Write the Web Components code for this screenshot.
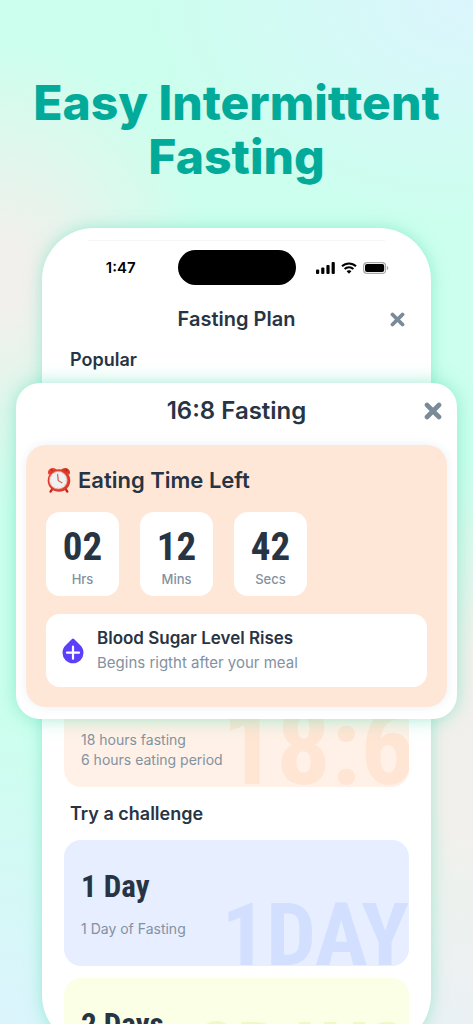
<!DOCTYPE html>
<html lang="en">
<head>
<meta charset="utf-8">
<meta name="viewport" content="width=device-width, initial-scale=1">
<title>Easy Intermittent Fasting</title>
<style>
  body {
    margin: 0;
    font-family: Inter, "Liberation Sans", sans-serif;
    color: #273444;
    --muted: #8391a1;
    --teal: #02ab99;
    --narrow: "Liberation Sans Narrow", "Roboto Condensed", Roboto, sans-serif;
  }
</style>
</head>
<body>
<promo-page>
  <span slot="title">Easy Intermittent Fasting</span>
  <phone-frame>
    <status-bar time="1:47"></status-bar>
    <sheet-header>Fasting Plan</sheet-header>
    <section-title>Popular</section-title>
    <fasting-popup>
      <sheet-header large>16:8 Fasting</sheet-header>
      <eating-timer>
        <time-tile slot="tiles" value="02">Hrs</time-tile>
        <time-tile slot="tiles" value="12">Mins</time-tile>
        <time-tile slot="tiles" value="42">Secs</time-tile>
        <body-status>Blood Sugar Level Rises<span slot="note">Begins rigtht after your meal</span></body-status>
      </eating-timer>
    </fasting-popup>
    <plan-card tone="peach" mark="18:6" tucked>18 hours fasting<br>6 hours eating period</plan-card>
    <section-title>Try a challenge</section-title>
    <plan-card tone="blue" mark="1DAY" heading="1 Day">1 Day of Fasting</plan-card>
    <plan-card tone="lime" mark="2DAYS" heading="2 Days" peek></plan-card>
  </phone-frame>
</promo-page>

<script>
const define = (name, render) => customElements.define(name, class extends HTMLElement {
  constructor() {
    super();
    this.attachShadow({ mode: 'open' });
  }
  connectedCallback() {
    this.shadowRoot.innerHTML = render(this);
  }
});

define('promo-page', () => `
  <style>
    :host {
      display: block; height: 100vh; overflow: hidden; box-sizing: border-box;
      padding: 76px 16px 0;
      background:
        radial-gradient(ellipse 70% 22% at 100% 0, #dcf5fd, #dcf5fd00),
        radial-gradient(ellipse 44% 23% at 0 27%, #f1f0ec 15%, #f1f0ec00),
        radial-gradient(ellipse 40% 28% at 100% 73%, #f2f0ec 30%, #f2f0ec00),
        radial-gradient(ellipse 50% 30% at 100% 100%, #eaf1f4 20%, #eaf1f400),
        radial-gradient(ellipse 50% 30% at 0 100%, #dcf4fd, #dcf4fd00),
        #ccffee;
    }
    h1 { margin: 0 -8px 44px; text-align: center; color: var(--teal); font-size: 48px; line-height: 54px; font-weight: 800; }
  </style>
  <h1><slot name="title"></slot></h1>
  <slot></slot>`);

define('phone-frame', () => `
  <style>
    :host {
      display: block; margin: 0 26px; padding: 12px 22px 0; border-radius: 52px;
      background: #fff; box-shadow: 0 0 16px #58dcb480;
    }
    .edge { height: 1px; margin: 0 24px; background: #f6f6f6; }
  </style>
  <div class="edge"></div>
  <slot></slot>`);

define('status-bar', el => `
  <style>
    :host { display: grid; grid-template-columns: 1fr 118px 1fr; align-items: center; margin-top: 9px; height: 35px; color: #000; }
    time { justify-self: center; font-size: 15px; line-height: 20px; font-weight: 600; }
    .island { height: 35px; border-radius: 18px; background: #000; }
    .icons { display: flex; gap: 6px; justify-content: center; align-items: center; }
    svg { display: block; }
  </style>
  <time>${el.getAttribute('time')}</time>
  <div class="island"></div>
  <div class="icons">
    <svg width="19" height="12" viewBox="0 0 19 12" aria-label="Signal"><rect x="0" y="7.500" width="3.200" height="4.500" rx="1"/><rect x="5.200" y="5.400" width="3.200" height="6.600" rx="1"/><rect x="10.400" y="3" width="3.200" height="9" rx="1"/><rect x="15.600" y="0" width="3.200" height="12" rx="1"/></svg>
    <svg width="16" height="12" viewBox="0 0 16 12" fill="none" stroke="#000" stroke-width="2" aria-label="Wi-Fi"><path d="M1 4.3a10 10 0 0 1 14 0M3.6 7a6.3 6.3 0 0 1 8.8 0"/><path d="M8 8.3c1 0 1.900.4 2.400 1L8 11.800 5.600 9.300c.5-.6 1.400-1 2.400-1z" fill="#000" stroke="none"/></svg>
    <svg width="26" height="12" viewBox="0 0 26 12" aria-label="Battery"><rect x=".6" y=".6" width="22" height="10.800" rx="3.500" fill="none" stroke="#a8a8a8" stroke-width="1.200"/><rect x="2" y="2" width="19.200" height="8" rx="2"/><path d="M24 4c1.800.6 1.800 3.400 0 4z" fill="#a8a8a8"/></svg>
  </div>`);

define('sheet-header', el => {
  const large = el.hasAttribute('large');
  return `
  <style>
    :host { display: grid; grid-template-columns: ${large ? '28px 1fr 28px' : '24px 1fr 24px'}; align-items: center; height: ${large ? 54 : 28}px; ${large ? '' : 'margin-top: 20px;'} }
    h2 { grid-column: 2; margin: 0; text-align: center; font-size: ${large ? 24 : 20}px; line-height: 28px; font-weight: 600; }
    button { display: grid; place-items: center; border: 0; padding: 0; background: none; height: 28px; cursor: pointer; }
  </style>
  <h2><slot></slot></h2>
  <button type="button" aria-label="Close"><svg width="${large ? 18 : 15}" height="${large ? 18 : 15}" viewBox="0 0 18 18"><path d="M3 3l12 12M15 3L3 15" stroke="#7b8a99" stroke-width="4.600" stroke-linecap="round"/></svg></button>`;
});

define('section-title', () => `
  <style>
    :host { display: block; padding: 15px 6px 14px; }
    h3 { margin: 0; font-size: 18px; line-height: 24px; font-weight: 600; }
  </style>
  <h3><slot></slot></h3>`);

define('fasting-popup', () => `
  <style>
    :host {
      display: block; position: relative; z-index: 1; margin: -3px -48px 0; padding: 1px 10px 12px;
      border-radius: 24px; background: #fff; box-shadow: 0 0 18px #58dcb490;
    }
  </style>
  <slot></slot>`);

define('eating-timer', () => `
  <style>
    :host { display: block; margin-top: 7px; padding: 20px; border-radius: 20px; background: #ffe7d8; box-shadow: 0 0 10px #5078b41c; }
    h2 { display: flex; align-items: center; gap: 6px; margin: 0 0 17px; font-size: 22px; line-height: 30px; font-weight: 600; }
    .tiles { display: flex; gap: 21px; margin-bottom: 18px; }
    svg { display: block; }
  </style>
  <h2>
    <svg width="26" height="28" viewBox="0 0 26 28" aria-label="Alarm clock">
      <path d="M7 22l-2.500 3.600M19 22l2.300 3.600" stroke="#c9281c" stroke-width="2.400" stroke-linecap="round"/>
      <path d="M2.500 8.500C1 5.500 3 2.300 6.500 2c2-.2 3.800.8 4.500 2.200z" fill="#e8402f"/>
      <path d="M23.500 8.500C25 5.500 23 2.300 19.500 2c-2-.2-3.800.8-4.500 2.200z" fill="#d93626"/>
      <path d="M5 3.200l1.600 2.400M21 3.200l-1.600 2.400" stroke="#8f1f17" stroke-width="1"/>
      <circle cx="13" cy="14.500" r="11.300" fill="#dc3a2a"/>
      <circle cx="12.300" cy="14.200" r="8.900" fill="#eff1f3" stroke="#f3927f" stroke-width=".8"/>
      <circle cx="12.300" cy="14.200" r="7.500" fill="none" stroke="#b5bbc0" stroke-width=".8" stroke-dasharray=".7 3.227"/>
      <path d="M11.600 8.500l.7 6.200 3.600 2" fill="none" stroke="#e0604e" stroke-width="1.300" stroke-linecap="round"/>
    </svg>
    Eating Time Left
  </h2>
  <div class="tiles"><slot name="tiles"></slot></div>
  <slot></slot>`);

define('time-tile', el => `
  <style>
    :host { display: flex; flex-direction: column; align-items: center; box-sizing: border-box; width: 73px; height: 84px; padding-top: 13px; border-radius: 14px; background: #fff; }
    b { font: 700 39px/44px var(--narrow); }
    span { font-size: 13px; line-height: 20px; font-weight: 500; color: var(--muted); }
  </style>
  <b>${el.getAttribute('value')}</b>
  <span><slot></slot></span>`);

define('body-status', () => `
  <style>
    :host { display: flex; align-items: center; gap: 13px; padding: 12px 16px; border-radius: 14px; background: #fff; }
    h3 { margin: 0; font-size: 17px; line-height: 25px; font-weight: 600; }
    p { margin: 0; font-size: 15px; line-height: 24px; color: var(--muted); }
    svg { flex: none; display: block; }
  </style>
  <svg width="22" height="26" viewBox="0 0 22 26" aria-hidden="true">
    <path d="M11 .4c.4 0 .7.2 1 .5l6.300 6.300A10.500 10.500 0 1 1 3.700 7.200L10 .9c.3-.3.600-.5 1-.5z" fill="#5a40fb"/>
    <path d="M11 8.700v12M5 14.700h12" stroke="#fff" stroke-width="2.200" stroke-linecap="round"/>
  </svg>
  <div><h3><slot></slot></h3><p><slot name="note"></slot></p></div>`);

const tones = {
  peach: ['#fff1e7', '#ffe5d3'],
  blue: ['#e7eeff', '#d2dfff'],
  lime: ['#fbffe6', '#f0f8c8'],
};
define('plan-card', el => {
  const [bg, mark] = tones[el.getAttribute('tone')];
  const heading = el.getAttribute('heading');
  const tucked = el.hasAttribute('tucked');
  const peek = el.hasAttribute('peek');
  return `
  <style>
    :host { display: block; position: relative; overflow: hidden; box-sizing: border-box; height: ${peek ? 69 : 126}px; padding: ${tucked ? 69 : 29}px 17px 0; border-radius: 17px; background: ${bg}; ${tucked ? 'margin-top: -58px;' : ''} }
    :host(:not([tucked]):not([peek])) { margin-bottom: 12px; }
    .mark { position: absolute; right: ${tucked ? -6 : 0}px; ${peek ? 'top: 46px' : 'bottom: 0'}; font: 700 ${tucked ? 108 : peek ? 80 : 88}px/72% var(--narrow); color: ${mark}; }
    h3 { position: relative; margin: 0 0 14px; font: 700 31px/36px var(--narrow); }
    p { position: relative; margin: 0; font-size: 14px; line-height: 20px; color: var(--muted); }
  </style>
  <div class="mark" aria-hidden="true">${el.getAttribute('mark')}</div>
  ${heading ? `<h3>${heading}</h3>` : ''}
  ${peek ? '' : '<p><slot></slot></p>'}`;
});
</script>
</body>
</html>
